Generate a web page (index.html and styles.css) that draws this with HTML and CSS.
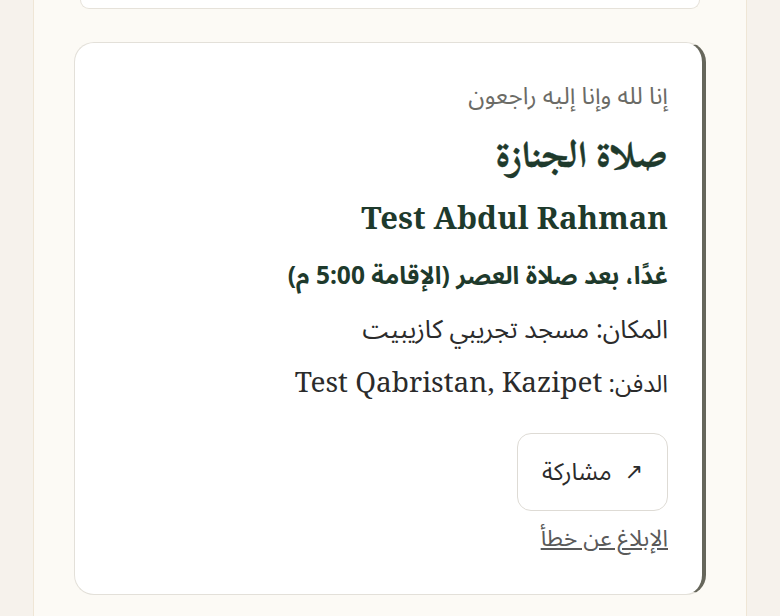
FILE: index.html
```html
<!DOCTYPE html>
<html lang="ar" dir="rtl">
<head>
<meta charset="utf-8">
<title>صلاة الجنازة</title>
<link rel="stylesheet" href="styles.css">
</head>
<body>
<main class="page">
  <div class="prev-card"></div>
  <article class="card">
    <p class="verse">إنا لله وإنا إليه راجعون</p>
    <h1 class="title">صلاة الجنازة</h1>
    <h2 class="name">Test Abdul Rahman</h2>
    <p class="time">غدًا، بعد صلاة العصر (الإقامة 5:00 م)</p>
    <p class="detail place">المكان: مسجد تجريبي كازيبيت</p>
    <p class="detail burial">الدفن: <span class="latin">Test Qabristan, Kazipet</span></p>
    <div class="actions">
      <button class="share" type="button"><span class="arrow">↗</span><span>مشاركة</span></button>
      <a class="report" href="#">الإبلاغ عن خطأ</a>
    </div>
  </article>
</main>
</body>
</html>
```
FILE: styles.css
```css
html, body {
  margin: 0;
  padding: 0;
}
body {
  background: #f6f2ec;
  font-family: "Noto Serif", "Noto Sans Arabic", "DejaVu Sans", serif;
  color: #2b2b2b;
  min-height: 616px;
}
.page {
  width: 714px;
  margin: 0 auto;
  min-height: 616px;
  background: #fcfaf5;
  border-left: 1px solid #efe6d6;
  border-right: 1px solid #efe6d6;
  display: flex;
  flex-direction: column;
  align-items: stretch;
  padding: 0 40px;
  box-sizing: border-box;
}
.prev-card {
  height: 8px;
  margin: 0 6px;
  background: #ffffff;
  border: 1px solid #e6e2da;
  border-top: none;
  border-radius: 0 0 20px 20px;
}
.card {
  margin-top: 33px;
  background: #ffffff;
  border: 1px solid #e3e0d9;
  border-right: 4px solid #66665b;
  border-radius: 20px;
  padding: 36px 34px 41px 32px;
  display: flex;
  flex-direction: column;
  align-items: flex-start;
}
.card p, .card h1, .card h2 {
  margin: 0;
}
.verse {
  font-family: "Noto Sans Arabic", "Noto Sans", sans-serif;
  font-size: 24px;
  line-height: 36px;
  color: #6b6b66;
}
.title {
  font-family: "Scheherazade New", "FreeSerif", serif;
  font-size: 37px;
  font-weight: 700;
  line-height: 52px;
  color: #1e3a2c;
  margin-top: 14px !important;
  -webkit-text-stroke: 0.4px #1e3a2c;
}
.name {
  font-family: "Noto Serif", serif;
  font-size: 31px;
  font-weight: 700;
  line-height: 44px;
  color: #1e3a2c;
  margin-top: 14px !important;
}
.time {
  font-family: "Noto Sans Arabic", "Noto Sans", sans-serif;
  font-size: 24.5px;
  font-weight: 700;
  line-height: 36px;
  color: #1e3a2c;
  margin-top: 19px !important;
}
.detail {
  font-family: "Noto Sans Arabic", "Noto Sans", sans-serif;
  color: #2b2b2b;
}
.place {
  font-size: 25.5px;
  line-height: 36px;
  margin-top: 18px !important;
}
.burial {
  font-size: 24px;
  line-height: 40px;
  margin-top: 13px !important;
}
.latin {
  font-family: "Noto Serif", serif;
  font-size: 28px;
}
.actions {
  margin-top: 28px;
  display: flex;
  flex-direction: column;
  align-items: flex-start;
  gap: 14px;
}
.share {
  font-family: "Noto Sans Arabic", "Noto Sans", sans-serif;
  font-size: 24px;
  color: #2b2b2b;
  background: #ffffff;
  border: 1.5px solid #dedbd5;
  border-radius: 14px;
  padding: 0;
  height: 78px;
  width: 151px;
  display: flex;
  align-items: center;
  justify-content: center;
  gap: 13px;
}
.arrow {
  font-family: "DejaVu Sans", sans-serif;
  font-size: 22px;
  line-height: 1;
}
.report {
  font-family: "Noto Sans Arabic", "Noto Sans", sans-serif;
  font-size: 23px;
  line-height: 28px;
  color: #5a5a5a;
  text-decoration: underline;
}
```
